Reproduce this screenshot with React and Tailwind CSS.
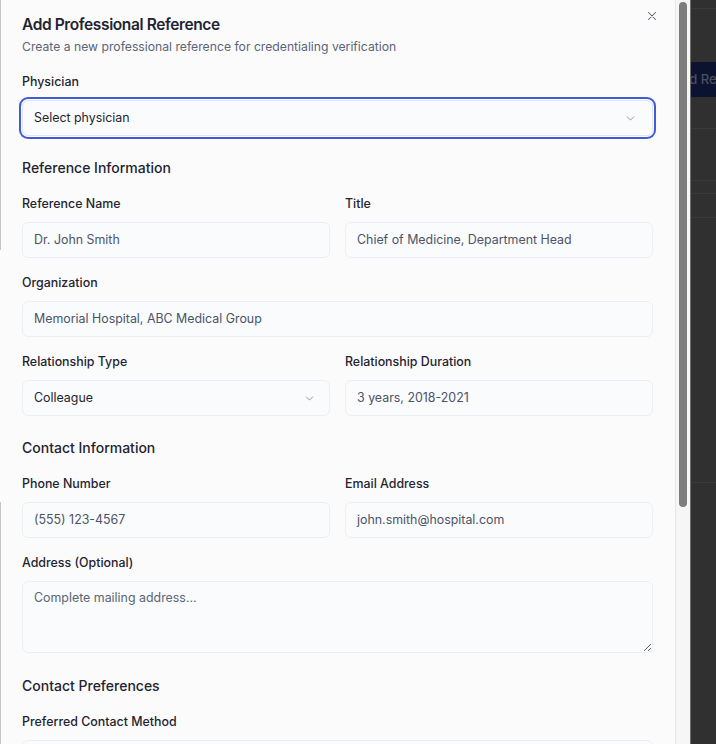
import React from "react";

function Chevron({ className }) {
  return (
    <svg className={className} width="13" height="13" viewBox="0 0 24 24" fill="none" stroke="currentColor" strokeWidth="1.75" strokeLinecap="round" strokeLinejoin="round">
      <path d="m6 9 6 6 6-6" />
    </svg>
  );
}

function Label({ children }) {
  return <div className="text-[12.4px] leading-[20px] font-medium text-[#1f2430] mb-2">{children}</div>;
}

function Input({ value }) {
  return (
    <div className="h-9 rounded-md border border-[#eceef3] bg-[#fafbfc] pl-[11px] pr-3 flex items-center text-[12.4px] text-[#4b5468]">
      {value}
    </div>
  );
}

function Select({ value }) {
  return (
    <div className="h-9 rounded-md border border-[#eceef3] bg-[#fafbfc] pl-[11px] pr-[13px] flex items-center justify-between text-[12.4px] text-[#1f2430]">
      <span>{value}</span>
      <Chevron className="text-[#8e93a0]" />
    </div>
  );
}

function Heading({ children, className = "mt-5" }) {
  return <div className={"text-[14px] leading-[24px] font-medium text-[#1f2430] mb-[14px] " + className}>{children}</div>;
}

export default function App() {
  return (
    <div className="relative w-[716px] h-[744px] overflow-hidden bg-[#303030] flex" style={{ fontFamily: "Inter, 'Noto Sans', sans-serif" }}>
      {/* panel */}
      <div className="relative w-[675px] h-[744px] bg-[#fbfbfc] px-[22px] pt-[15px] shrink-0">
        <div className="absolute left-0 top-0 w-px h-[250px] bg-[#c4c4c4]" />
        <div className="absolute left-0 top-[502px] w-px h-[242px] bg-[#c4c4c4]" />
        <button className="absolute left-[645px] top-[9px] text-[#5a5f6b]">
          <svg width="14" height="14" viewBox="0 0 24 24" fill="none" stroke="currentColor" strokeWidth="1.75" strokeLinecap="round">
            <path d="M18 6 6 18M6 6l12 12" />
          </svg>
        </button>
        <div className="text-[15.5px] leading-[20px] font-semibold tracking-tight text-[#1f2430]">Add Professional Reference</div>
        <div className="mt-0.5 text-[12.2px] leading-[20px] text-[#5b6475]">Create a new professional reference for credentialing verification</div>

        <div className="mt-[15px]">
          <Label>Physician</Label>
          <div className="h-9 rounded-md border border-[#e3e6f2] bg-[#fafbfc] pl-[11px] pr-[15px] flex items-center justify-between text-[12.4px] text-[#1f2430] ring-2 ring-[#3f5bd8] ring-offset-1 ring-offset-[#fbfbfc]">
            <span>Select physician</span>
            <Chevron className="text-[#8e93a0]" />
          </div>
        </div>

        <Heading>Reference Information</Heading>
        <div className="flex flex-col gap-[15px]">
          <div className="grid grid-cols-2 gap-[15px]">
            <div>
              <Label>Reference Name</Label>
              <Input value="Dr. John Smith" />
            </div>
            <div>
              <Label>Title</Label>
              <Input value="Chief of Medicine, Department Head" />
            </div>
          </div>
          <div>
            <Label>Organization</Label>
            <Input value="Memorial Hospital, ABC Medical Group" />
          </div>
          <div className="grid grid-cols-2 gap-[15px]">
            <div>
              <Label>Relationship Type</Label>
              <Select value="Colleague" />
            </div>
            <div>
              <Label>Relationship Duration</Label>
              <Input value="3 years, 2018-2021" />
            </div>
          </div>
        </div>

        <Heading>Contact Information</Heading>
        <div className="flex flex-col gap-[15px]">
          <div className="grid grid-cols-2 gap-[15px]">
            <div>
              <Label>Phone Number</Label>
              <Input value="(555) 123-4567" />
            </div>
            <div>
              <Label>Email Address</Label>
              <Input value="john.smith@hospital.com" />
            </div>
          </div>
          <div>
            <Label>Address (Optional)</Label>
            <textarea
              readOnly
              placeholder="Complete mailing address..."
              className="block w-full h-[72px] rounded-md border border-[#eceef3] bg-[#fafbfc] pl-[11px] pr-3 py-[6px] text-[12.4px] leading-[20px] text-[#4b5468] placeholder:text-[#5b6475] outline-none"
            />
          </div>
        </div>

        <Heading className="mt-[21px]">Contact Preferences</Heading>
        <div>
          <Label>Preferred Contact Method</Label>
          <div className="h-9 rounded-md border border-[#eceef3] bg-[#fafbfc]" />
        </div>
      </div>

      {/* scrollbar */}
      <div className="relative w-[15px] h-[744px] bg-[#f6f6f6] border-l border-[#e6e6e6] shrink-0">
        <div className="absolute left-[3px] top-[2px] w-[8px] h-[505px] rounded-full bg-[#7d7d7d]" />
      </div>
      <div className="w-px h-[744px] bg-[#6e6e6e] shrink-0" />

      {/* background page, dimmed */}
      <div className="relative flex-1 h-[744px] bg-[#303030] overflow-hidden">
        <div className="h-[9px] border-b border-[#3a3a3a]" />
        <div className="mt-[53px] h-[35px] w-[120px] -ml-[27px] bg-[#0b1330] flex items-center pl-[8px] text-[13px] font-medium text-[#4b4f5c] whitespace-nowrap">
          Add Reference
        </div>
        <div className="mt-[31px] border-t border-[#3a3a3a]" />
        <div className="mt-[51px] border-t border-[#3a3a3a]" />
        <div className="mt-[12px] border-t border-[#3a3a3a]" />
        <div className="mt-[23px] border-t border-[#3a3a3a]" />
        <div className="mt-[264px] border-t border-[#3a3a3a]" />
      </div>
    </div>
  );
}
